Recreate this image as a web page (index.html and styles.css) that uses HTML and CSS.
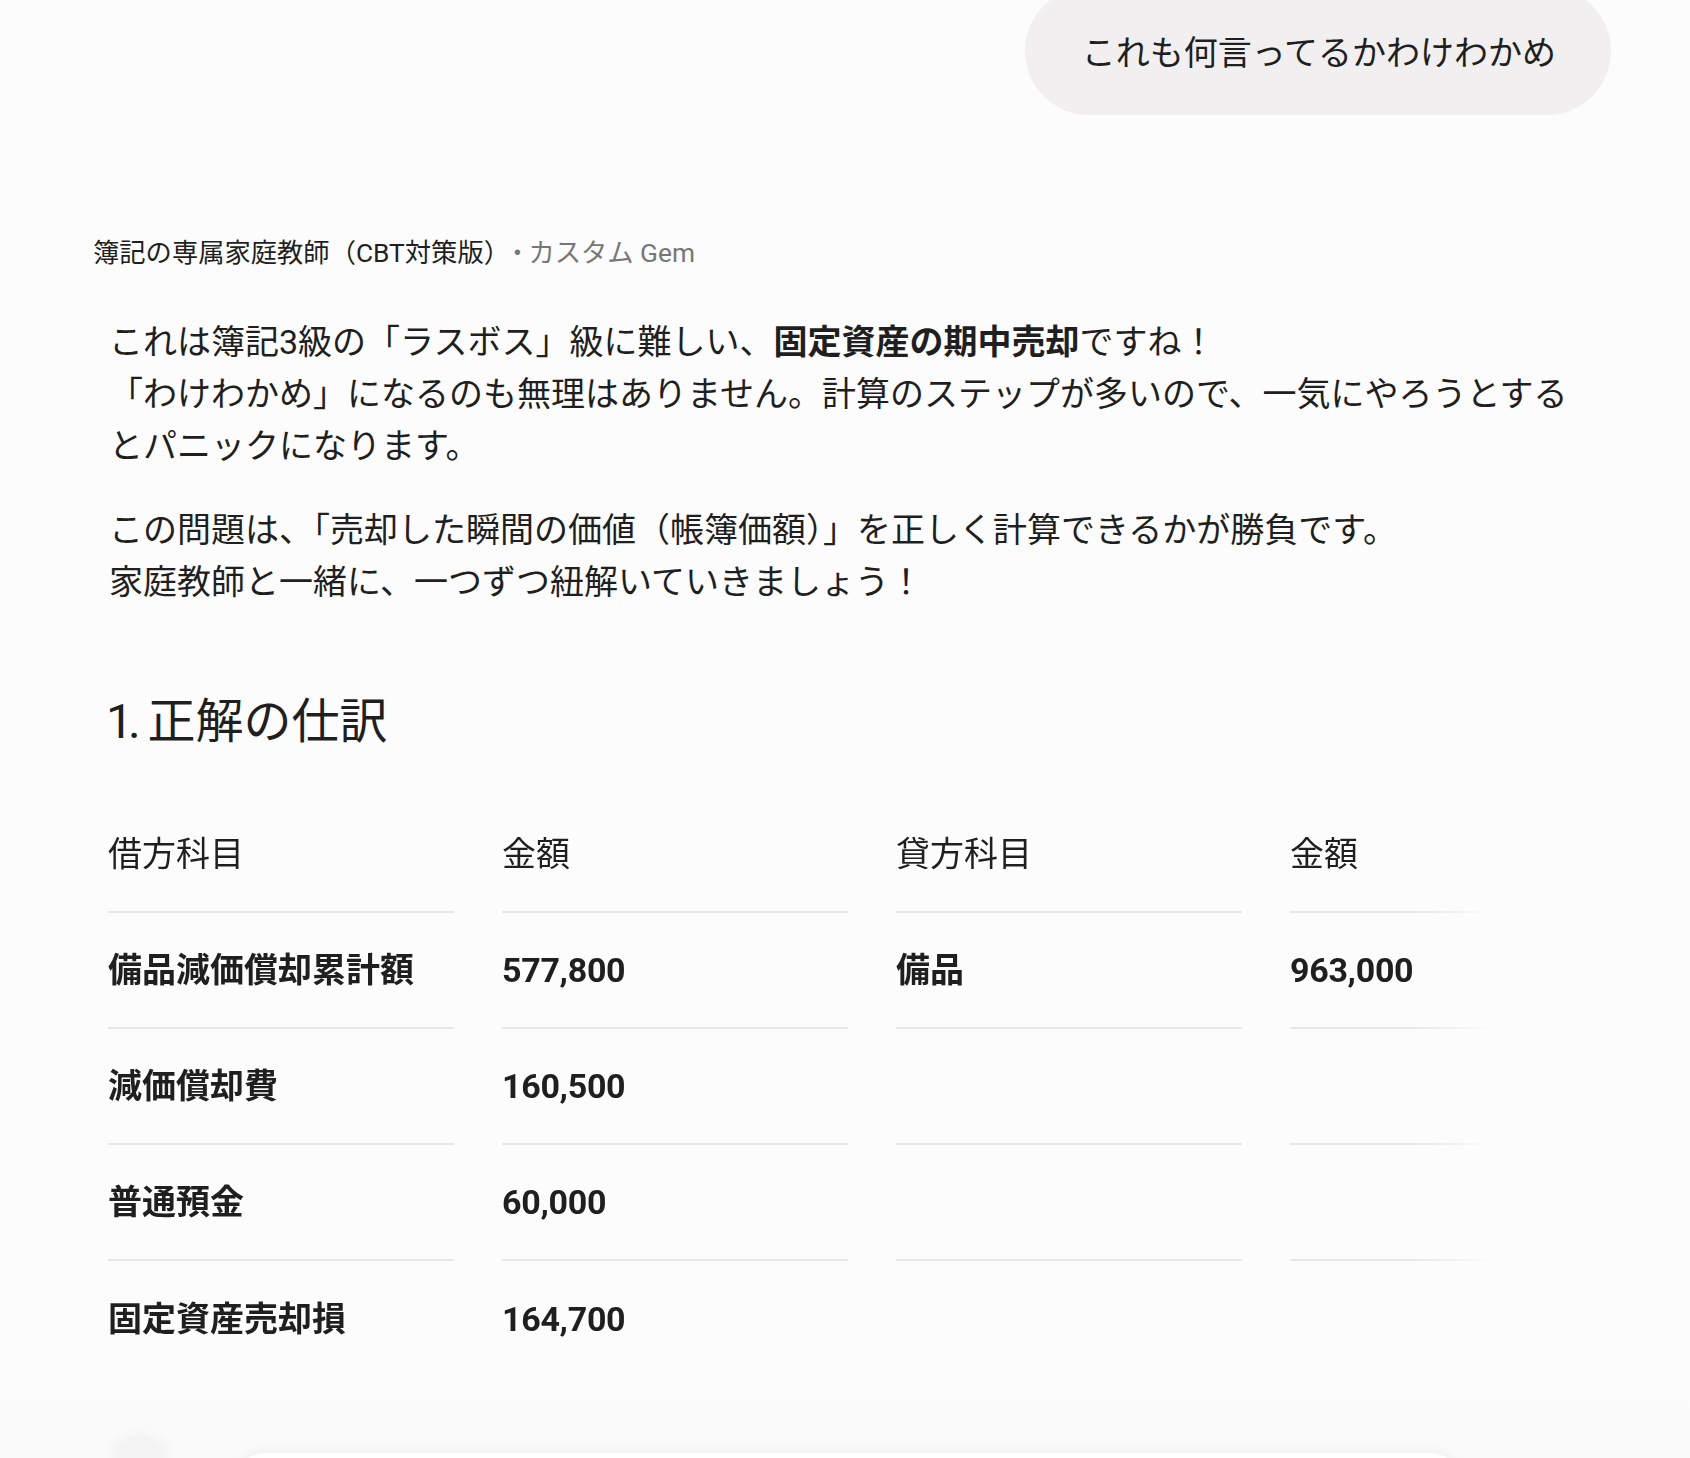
FILE: index.html
```html
<!DOCTYPE html>
<html lang="ja">
<head>
<meta charset="utf-8">
<title>Chat</title>
<link rel="stylesheet" href="styles.css">
</head>
<body>
<div class="page">
  <div class="user-row">
    <div class="user-bubble">これも何言ってるかわけわかめ</div>
  </div>

  <div class="response">
    <div class="gem-header">
      <span class="gem-name">簿記の専属家庭教師（CBT対策版）</span>
      <span class="gem-meta">• カスタム Gem</span>
    </div>

    <div class="answer">
      <p class="para">これは簿記3級の「ラスボス」級に難しい、<strong>固定資産の期中売却</strong>ですね！<br>「わけわかめ」になるのも無理はありません。計算のステップが多いので、一気にやろうとするとパニックになります。</p>
      <p class="para">この問題は、「売却した瞬間の価値（帳簿価額）」を正しく計算できるかが勝負です。<br>家庭教師と一緒に、一つずつ紐解いていきましょう！</p>

      <h2 class="heading"><span class="hnum">1.</span> 正解の仕訳</h2>

      <div class="table-wrap">
        <div class="jtable">
          <div class="cell head">借方科目</div>
          <div class="cell head">金額</div>
          <div class="cell head">貸方科目</div>
          <div class="cell head">金額</div>

          <div class="cell strong">備品減価償却累計額</div>
          <div class="cell strong num">577,800</div>
          <div class="cell strong">備品</div>
          <div class="cell strong num">963,000</div>

          <div class="cell strong">減価償却費</div>
          <div class="cell strong num">160,500</div>
          <div class="cell"></div>
          <div class="cell"></div>

          <div class="cell strong">普通預金</div>
          <div class="cell strong num">60,000</div>
          <div class="cell"></div>
          <div class="cell"></div>

          <div class="cell strong last">固定資産売却損</div>
          <div class="cell strong num last">164,700</div>
          <div class="cell last"></div>
          <div class="cell last"></div>
        </div>
      </div>
    </div>
  </div>

  <div class="bottom-fade"></div>
  <div class="scroll-blob"></div>
  <div class="input-box"></div>
</div>
</body>
</html>
```

FILE: styles.css
```css
html, body {
  margin: 0;
  padding: 0;
  background: #fcfcfc;
}

body {
  width: 1690px;
  height: 1458px;
  overflow: hidden;
  font-family: "Roboto", "Noto Sans CJK JP", sans-serif;
  color: #1f1f1f;
}

.page {
  position: relative;
  width: 1690px;
  height: 1458px;
  overflow: hidden;
}

.user-row {
  display: flex;
  justify-content: flex-end;
  padding-right: 79px;
  margin-top: -13px;
}

.user-bubble {
  background: #f1efef;
  border-radius: 64px;
  padding: 38px 55px 38px 57px;
  font-size: 34px;
  line-height: 52px;
  color: #1f1f1f;
  font-family: "Noto Sans CJK JP", sans-serif;
}

.response {
  padding-left: 93px;
  margin-top: 121px;
}

.gem-header {
  font-size: 26.3px;
  line-height: 34px;
  display: flex;
  gap: 3px;
  align-items: center;
}

.gem-name {
  color: #1f1f1f;
}

.gem-meta {
  color: #777777;
}

.answer {
  padding-left: 16px;
  width: 1480px;
  margin-top: 46px;
}

.para {
  margin: 0 0 32px 0;
  font-size: 34px;
  line-height: 52px;
}

.para strong {
  font-weight: 700;
}

.heading {
  margin: 84px 0 0 -3px;
  font-size: 48px;
  line-height: 60px;
  font-weight: 400;
}

.hnum {
  letter-spacing: -5px;
}

.table-wrap {
  margin-top: 45px;
  margin-left: -1px;
  width: 1385px;
  overflow: hidden;
  -webkit-mask-image: linear-gradient(to right, #000 calc(100% - 80px), transparent);
  mask-image: linear-gradient(to right, #000 calc(100% - 80px), transparent);
}

.jtable {
  display: grid;
  grid-template-columns: repeat(4, 346px);
  column-gap: 48px;
  width: max-content;
}

.cell {
  box-sizing: border-box;
  height: 116px;
  border-bottom: 2px solid #e7e7e7;
  display: flex;
  align-items: center;
  font-size: 34px;
  line-height: 52px;
  white-space: nowrap;
}

.cell.head {
  font-weight: 400;
}

.cell.strong {
  font-weight: 700;
}

.cell.num {
  letter-spacing: -0.3px;
}

.cell.last {
  border-bottom: none;
}

.bottom-fade {
  position: absolute;
  left: 0;
  right: 0;
  top: 1385px;
  height: 73px;
  background: linear-gradient(to bottom, rgba(252,252,252,0), #fafafa 60%);
}

.scroll-blob {
  position: absolute;
  left: 112px;
  top: 1434px;
  width: 56px;
  height: 40px;
  border-radius: 50%;
  background: #f3f3f3;
  filter: blur(3px);
}

.input-box {
  position: absolute;
  left: 233px;
  right: 228px;
  top: 1453px;
  height: 120px;
  background: #ffffff;
  border-radius: 32px;
  box-shadow: 0 -2px 10px rgba(0,0,0,0.05);
}
```
